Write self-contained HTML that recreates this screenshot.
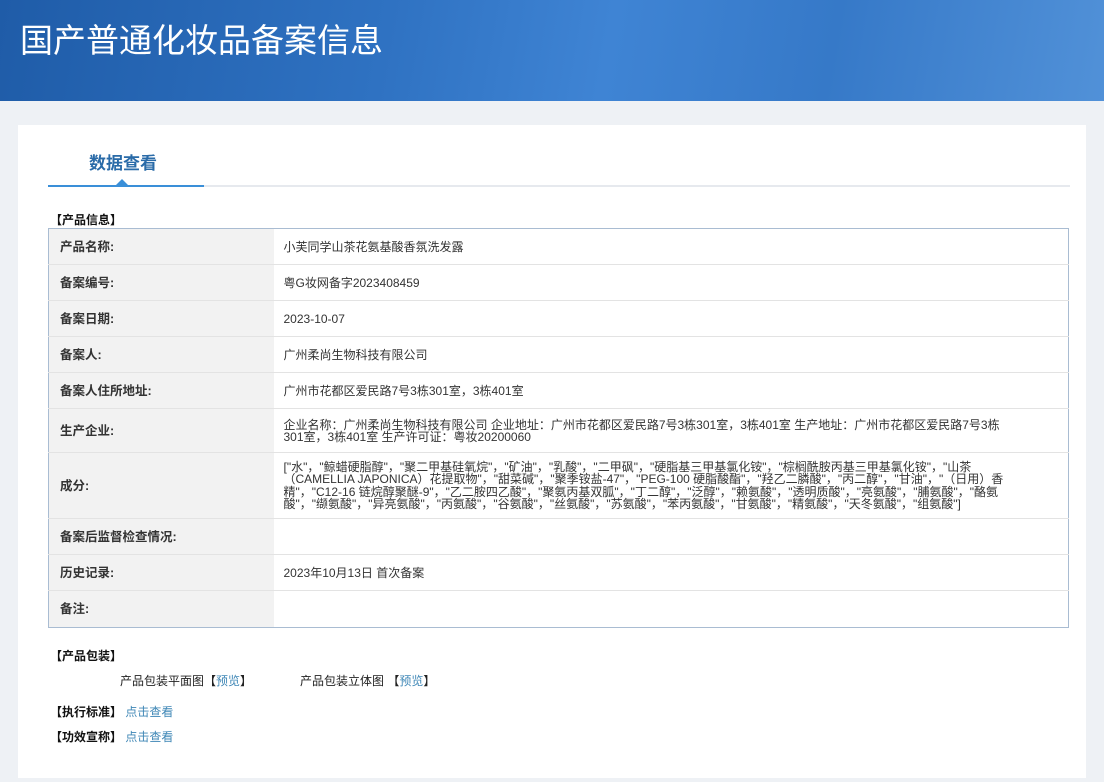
<!DOCTYPE html>
<html><head><meta charset="utf-8"><style>
*{margin:0;padding:0;box-sizing:border-box}
body{width:1104px;height:782px;overflow:hidden;background:#eef1f5;font-family:"Liberation Sans","Microsoft YaHei","Noto Sans CJK SC",sans-serif;font-size:12px;color:#333}
.hd{position:absolute;left:0;top:0;width:1104px;height:101px;background:linear-gradient(100deg,#1f5ca8 0%,#2f72c2 35%,#3f84d4 55%,#3679c8 75%,#5191d8 100%)}
.hd h1{position:absolute;left:20px;top:14px;font-size:33px;font-weight:normal;color:#fff;font-family:"Noto Sans CJK SC",sans-serif}
.card{position:absolute;left:18px;top:125px;width:1068px;height:653px;background:#fff}
.tab{position:absolute;left:89px;top:149px;font-size:17px;font-weight:bold;color:#2a6ba8;font-family:"Noto Sans CJK SC",sans-serif}
.line{position:absolute;left:48px;top:185px;width:1022px;height:2px;background:#e6e9ee}
.line2{position:absolute;left:48px;top:185px;width:156px;height:2px;background:#3a8fd8}
.tri{position:absolute;left:116px;top:179px;width:0;height:0;border-left:6px solid transparent;border-right:6px solid transparent;border-bottom:6px solid #3a8fd8}
.sec{position:absolute;left:50px;font-size:12px;font-weight:bold;color:#111}
table{position:absolute;left:48px;top:228px;width:1021px;border-collapse:collapse;border:1px solid #a9bcd2}
td{border-bottom:1px solid #e3e3e3;vertical-align:middle;line-height:12px}
td.l{width:225px;background:#f2f2f2;padding-left:11px;font-weight:bold;font-size:12.5px;color:#333}
td.v{padding:0 60px 0 10px;font-size:12px;color:#333}
a{color:#3f87b6;text-decoration:none}
.t{position:absolute;font-size:12px;color:#222}
</style></head><body>
<div class="hd"><h1>国产普通化妆品备案信息</h1></div>
<div class="card"></div>
<div class="tab">数据查看</div>
<div class="line"></div><div class="line2"></div><div class="tri"></div>
<div class="sec" style="top:211px">【产品信息】</div>
<table>
<tr style="height:36px"><td class="l">产品名称:</td><td class="v">小芙同学山茶花氨基酸香氛洗发露</td></tr>
<tr style="height:36px"><td class="l">备案编号:</td><td class="v">粤G妆网备字2023408459</td></tr>
<tr style="height:36px"><td class="l">备案日期:</td><td class="v">2023-10-07</td></tr>
<tr style="height:36px"><td class="l">备案人:</td><td class="v">广州柔尚生物科技有限公司</td></tr>
<tr style="height:36px"><td class="l">备案人住所地址:</td><td class="v">广州市花都区爱民路7号3栋301室，3栋401室</td></tr>
<tr style="height:44px"><td class="l">生产企业:</td><td class="v">企业名称：广州柔尚生物科技有限公司 企业地址：广州市花都区爱民路7号3栋301室，3栋401室 生产地址：广州市花都区爱民路7号3栋301室，3栋401室 生产许可证：粤妆20200060</td></tr>
<tr style="height:66px"><td class="l">成分:</td><td class="v" style="line-height:12.5px">["水"，"鲸蜡硬脂醇"，"聚二甲基硅氧烷"，"矿油"，"乳酸"，"二甲砜"，"硬脂基三甲基氯化铵"，"棕榈酰胺丙基三甲基氯化铵"，"山茶（CAMELLIA JAPONICA）花提取物"，"甜菜碱"，"聚季铵盐-47"，"PEG-100 硬脂酸酯"，"羟乙二膦酸"，"丙二醇"，"甘油"，"（日用）香精"，"C12-16 链烷醇聚醚-9"，"乙二胺四乙酸"，"聚氨丙基双胍"，"丁二醇"，"泛醇"，"赖氨酸"，"透明质酸"，"亮氨酸"，"脯氨酸"，"酪氨酸"，"缬氨酸"，"异亮氨酸"，"丙氨酸"，"谷氨酸"，"丝氨酸"，"苏氨酸"，"苯丙氨酸"，"甘氨酸"，"精氨酸"，"天冬氨酸"，"组氨酸"]</td></tr>
<tr style="height:36px"><td class="l">备案后监督检查情况:</td><td class="v"></td></tr>
<tr style="height:36px"><td class="l">历史记录:</td><td class="v">2023年10月13日 首次备案</td></tr>
<tr style="height:37px"><td class="l" style="border-bottom:0">备注:</td><td class="v" style="border-bottom:0"></td></tr>
</table>
<div class="sec" style="top:647px">【产品包装】</div>
<div class="t" style="left:120px;top:672px">产品包装平面图【<a>预览</a>】</div>
<div class="t" style="left:300px;top:672px">产品包装立体图 【<a>预览</a>】</div>
<div class="sec" style="top:703px">【执行标准】 <a style="font-weight:normal">点击查看</a></div>
<div class="sec" style="top:728px">【功效宣称】 <a style="font-weight:normal">点击查看</a></div>
</body></html>
